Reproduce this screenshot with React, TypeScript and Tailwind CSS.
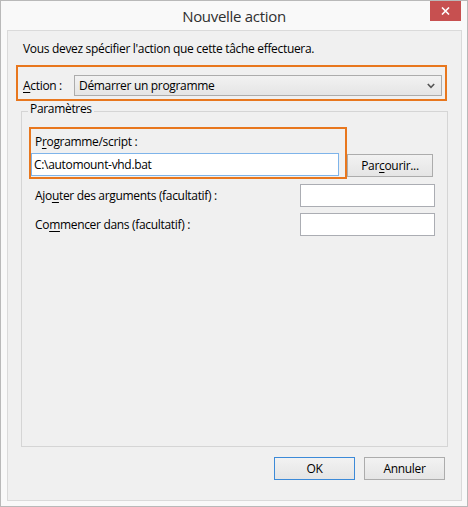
import React from "react";

const font = { fontFamily: '"Open Sans", "Noto Sans", sans-serif' };

function U({ children }: { children: React.ReactNode }) {
  return <span className="underline underline-offset-2 decoration-1">{children}</span>;
}

export default function App() {
  return (
    <div
      className="w-[468px] h-[507px] bg-[#f9f9f9] border border-[#b9b9b9] flex flex-col text-[12px] leading-[16px] tracking-[-0.32px] text-black"
      style={font}
    >
      {/* Title bar */}
      <div className="relative h-[29px] flex items-center justify-center">
        <span className="text-[15px] leading-[20px] tracking-[-0.3px] text-[#2f2f2f]">Nouvelle action</span>
        <div className="absolute top-0 right-[6px] w-[31px] h-[20px] bg-[#c75050] flex items-center justify-center">
          <svg width="9" height="8" viewBox="0 0 9 8">
            <path d="M1 0.5 L8 7.5 M8 0.5 L1 7.5" stroke="#fff" strokeWidth="1.6" />
          </svg>
        </div>
      </div>

      {/* Content panel */}
      <div className="ml-[6px] mr-[5px] h-[471px] border border-[#dadada] bg-[#f0f0f0] flex flex-col">
        <div className="pl-[15px] pt-[10px]">Vous devez spécifier l'action que cette tâche effectuera.</div>

        {/* Action row */}
        <div className="mt-[8px] ml-[8px] w-[431px] h-[36px] border-2 border-[#e8771e] flex items-start pl-[5px] pt-[8px]">
          <div className="w-[51px] h-[21px] flex items-center">
            <span>
              <U>A</U>ction :
            </span>
          </div>
          <div className="w-[368px] h-[21px] border border-[#acacac] bg-gradient-to-b from-[#f2f2f2] to-[#e5e5e5] flex items-center justify-between pl-[4px] pr-[6px]">
            <span>Démarrer un programme</span>
            <svg width="8" height="6" viewBox="0 0 8 6">
              <path d="M0.8 1 L4 4.3 L7.2 1" stroke="#555" strokeWidth="1.6" fill="none" />
            </svg>
          </div>
        </div>

        {/* Group box */}
        <div className="relative mt-[10px] ml-[13px] w-[427px] h-[336px] border border-[#d5d5d5] flex flex-col">
          <span className="absolute -top-[11px] left-[6px] px-[2px] bg-[#f0f0f0]">Paramètres</span>

          <div className="mt-[15px] ml-[7px] flex items-end">
            <div className="w-[318px] h-[52px] border-2 border-[#e8771e] flex flex-col pt-[5px]">
              <span className="ml-[4px]">
                P<U>r</U>ogramme/script :
              </span>
              <div className="mt-[3px] w-[308px] h-[23px] border border-[#7eb4ea] bg-white flex items-center pl-[2px]">
                C:\automount-vhd.bat
              </div>
            </div>
            <div className="mb-[2px] w-[86px] h-[23px] border border-[#acacac] bg-gradient-to-b from-[#f2f2f2] to-[#e5e5e5] flex items-center justify-center">
              <span>
                Par<U>c</U>ourir...
              </span>
            </div>
          </div>

          <div className="mt-[5px] pl-[13px] pr-[12px] flex items-center justify-between">
            <span>
              Ajo<U>u</U>ter des arguments (facultatif) :
            </span>
            <div className="w-[135px] h-[23px] border border-[#abadb3] bg-white" />
          </div>
          <div className="mt-[6px] pl-[13px] pr-[12px] flex items-center justify-between">
            <span>
              Co<U>m</U>mencer dans (facultatif) :
            </span>
            <div className="w-[135px] h-[23px] border border-[#abadb3] bg-white" />
          </div>
        </div>

        {/* Buttons */}
        <div className="mt-[10px] pr-[16px] flex justify-end gap-[9px]">
          <div className="w-[81px] h-[23px] border border-[#3c8ad8] bg-gradient-to-b from-[#f2f2f2] to-[#e5e5e5] flex items-center justify-center">
            OK
          </div>
          <div className="w-[81px] h-[23px] border border-[#acacac] bg-gradient-to-b from-[#f2f2f2] to-[#e5e5e5] flex items-center justify-center">
            Annuler
          </div>
        </div>
      </div>
    </div>
  );
}
